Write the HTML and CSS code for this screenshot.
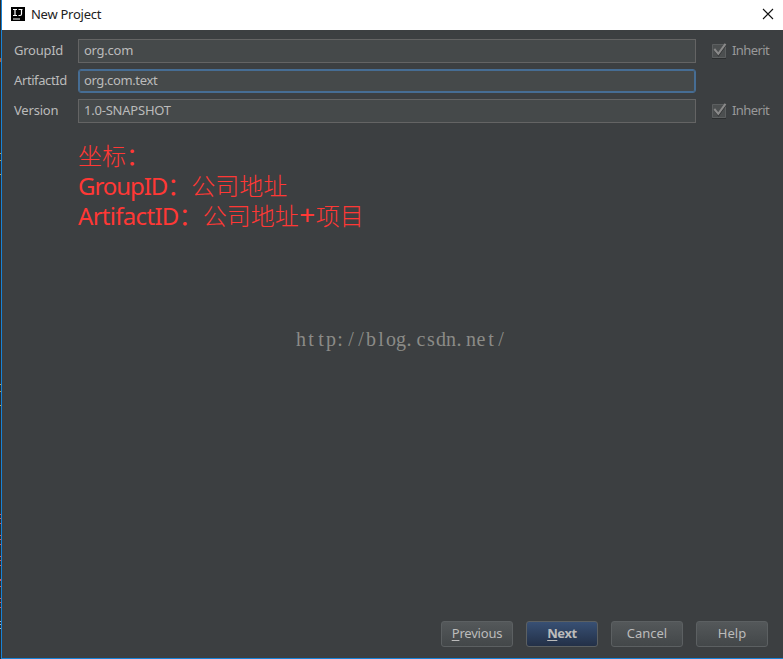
FILE: index.html
```html
<!DOCTYPE html>
<html lang="zh-CN">
<head>
<meta charset="utf-8">
<title>New Project</title>
<link rel="stylesheet" href="styles.css">
</head>
<body>
<div class="gutter"></div>
<main class="window">
  <header class="titlebar">
    <svg class="logo" width="14" height="14" viewBox="0 0 14 14"><path d="M0 0h14v14H0z"/><path d="M2 2.5h4M4 2.5v6M2 8.5h4M7.5 2.5h4M10.5 2.5v4.5q0 1.5-1.5 1.5H7.5" fill="none" stroke="#fff" stroke-width="1.2"/><path d="M2 11.5h7v1H2z" fill="#fff"/></svg>
    <span class="title">New Project</span>
    <svg class="close" width="12" height="12" viewBox="0 0 12 12"><path d="M1 1l10 10M11 1L1 11" stroke="#111" stroke-width="1.1"/></svg>
  </header>
  <section class="form">
    <div class="row">
      <label class="name group">GroupId</label><div class="field org">org.com</div>
      <svg class="check" width="16" height="16" viewBox="0 0 16 16"><path class="box" d="M1.5 1.5h13v13h-13z"/><path class="base" d="M1 15.5h14"/><path class="shade" d="M3.5 6.5l4 5.5L14.5 2"/><path class="tick" d="M3.3 6l4 4.8L14.5 .8"/></svg>
      <span class="inherit">Inherit</span>
    </div>
    <div class="row">
      <label class="name artifact">ArtifactId</label><div class="field focus">org.com.text</div>
    </div>
    <div class="row">
      <label class="name version">Version</label><div class="field snapshot">1.0-SNAPSHOT</div>
      <svg class="check" width="16" height="16" viewBox="0 0 16 16"><path class="box" d="M1.5 1.5h13v13h-13z"/><path class="base" d="M1 15.5h14"/><path class="shade" d="M3.5 6.5l4 5.5L14.5 2"/><path class="tick" d="M3.3 6l4 4.8L14.5 .8"/></svg>
      <span class="inherit">Inherit</span>
    </div>
  </section>
  <section class="notes">
    <p>坐标<span class="colon">：</span></p>
    <p><span class="latin-g">GroupID</span><span class="colon">：</span>公司地址</p>
    <p><span class="latin-a">ArtifactID</span><span class="colon">：</span>公司地址<span class="plus">+</span>项目</p>
  </section>
  <svg class="watermark" width="214" height="30" viewBox="0 0 214 30"><text y="21" x="6 16 26 36 45 56 66 76 86 96 106 114 126 136 146 156 164 176 186 196 206">http://blog.csdn.net/</text></svg>
  <footer class="buttons">
    <button class="previous"><u>P</u>revious</button>
    <button class="primary"><u>N</u>ext</button>
    <button>Cancel</button>
    <button>Help</button>
  </footer>
</main>
</body>
</html>
```
FILE: styles.css
```css
* { box-sizing: border-box; }
body {
  margin: 0;
  width: 783px;
  height: 659px;
  display: flex;
  overflow: hidden;
  background: #3c3f41;
  color: #bbb;
  font: 13px/20px "Noto Sans", "Noto Sans CJK SC", sans-serif;
}
p { margin: 0; }
.gutter {
  width: 1px;
  background:
    linear-gradient(#b55a26, #b55a26) 0 58px / 1px 4px no-repeat,
    linear-gradient(#c4a14b, #c4a14b) 0 153px / 1px 1px no-repeat,
    linear-gradient(#c4a14b, #c4a14b) 0 160px / 1px 1px no-repeat,
    linear-gradient(#c4a14b, #c4a14b) 0 174px / 1px 1px no-repeat,
    linear-gradient(#c4a14b, #c4a14b) 0 384px / 1px 1px no-repeat,
    linear-gradient(#c4a14b, #c4a14b) 0 391px / 1px 1px no-repeat,
    linear-gradient(#c4a14b, #c4a14b) 0 405px / 1px 1px no-repeat,
    linear-gradient(#e05555, #e05555) 0 514px / 1px 1px no-repeat,
    linear-gradient(#e05555, #e05555) 0 518px / 1px 1px no-repeat,
    linear-gradient(#e05555, #e05555) 0 523px / 1px 1px no-repeat,
    linear-gradient(#e05555, #e05555) 0 535px / 1px 1px no-repeat,
    linear-gradient(#e05555, #e05555) 0 539px / 1px 1px no-repeat,
    linear-gradient(#e05555, #e05555) 0 544px / 1px 1px no-repeat,
    linear-gradient(#e05555, #e05555) 0 556px / 1px 1px no-repeat,
    linear-gradient(#e05555, #e05555) 0 560px / 1px 1px no-repeat,
    linear-gradient(#e05555, #e05555) 0 565px / 1px 1px no-repeat,
    linear-gradient(#e05555, #e05555) 0 579px / 1px 2px no-repeat,
    linear-gradient(#e05555, #e05555) 0 586px / 1px 1px no-repeat,
    linear-gradient(#e05555, #e05555) 0 598px / 1px 1px no-repeat,
    linear-gradient(#e05555, #e05555) 0 602px / 1px 1px no-repeat,
    linear-gradient(#e05555, #e05555) 0 607px / 1px 1px no-repeat,
    linear-gradient(#a9b7c6, #a9b7c6) 0 621px / 1px 1px no-repeat,
    linear-gradient(#a9b7c6, #a9b7c6) 0 624px / 1px 1px no-repeat,
    linear-gradient(#a9b7c6, #a9b7c6) 0 628px / 1px 1px no-repeat,
    #2b2b2b;
}
.window {
  flex: 1;
  display: flex;
  flex-direction: column;
  border-left: 1px solid #1883d7;
  border-bottom: 1px solid #1883d7;
}
.titlebar {
  height: 30px;
  flex: none;
  display: flex;
  align-items: center;
  padding: 0 9px 2px;
  background: #fff;
  color: #222;
}
.title { margin-left: 6px; letter-spacing: -.26px; }
.close { margin-left: auto; }
.form {
  display: flex;
  flex-direction: column;
  gap: 6px;
  padding: 9px 0 0 12px;
}
.row { display: flex; height: 24px; align-items: center; }
.name { width: 64px; }
.name, .inherit { position: relative; top: -1px; }
.group { letter-spacing: -.25px; }
.artifact { letter-spacing: -.4px; }
.version { letter-spacing: -.2px; }
.field {
  width: 618px;
  height: 24px;
  padding: 0 5px;
  line-height: 21px;
  border: 1px solid #646464;
  background: #45494a;
}
.org { letter-spacing: -.25px; }
.snapshot { letter-spacing: -.22px; }
.focus {
  border-color: #466d94;
  border-radius: 3px;
  box-shadow: inset 0 0 0 1px #466d94;
  letter-spacing: -.37px;
}
.check { margin: -1px 5px 0 15px; }
.box { fill: #4c4f50; stroke: #5c5f60; }
.base { stroke: #2c2e2f; }
.shade { fill: none; stroke: #303233; stroke-width: 2; }
.tick { fill: none; stroke: #8a8a8a; stroke-width: 2; }
.inherit { color: #999; letter-spacing: -.6px; }
.notes {
  margin: 18px 0 0 76px;
  color: #ff3835;
  font: 300 24px/30px "Noto Sans", "Noto Sans CJK SC", sans-serif;
}
.latin-g, .latin-a, .plus, .colon { font-weight: 400; }
.latin-g { letter-spacing: -1.05px; }
.latin-a { letter-spacing: -.7px; }
.plus { display: inline-block; width: 17px; font-size: 28px; line-height: 24px; text-align: center; }
.watermark {
  flex: none;
  margin: 94px 0 0 293px;
  fill: #8b8b87;
  font: 20px "Liberation Serif", serif;
  text-anchor: middle;
}
.buttons {
  margin: auto 15px 11px 0;
  display: flex;
  justify-content: flex-end;
  gap: 13px;
}
button {
  width: 72px;
  height: 26px;
  padding: 0 0 2px;
  border: 1px solid #5c6062;
  border-radius: 3px;
  background: linear-gradient(#54585a, #434749);
  color: #bbb;
  font: inherit;
  line-height: 20px;
}
.previous { letter-spacing: -.2px; }
u { text-underline-offset: 2px; }
.primary { background: linear-gradient(#385074, #233047); font-weight: 700; letter-spacing: -.4px; }
```
